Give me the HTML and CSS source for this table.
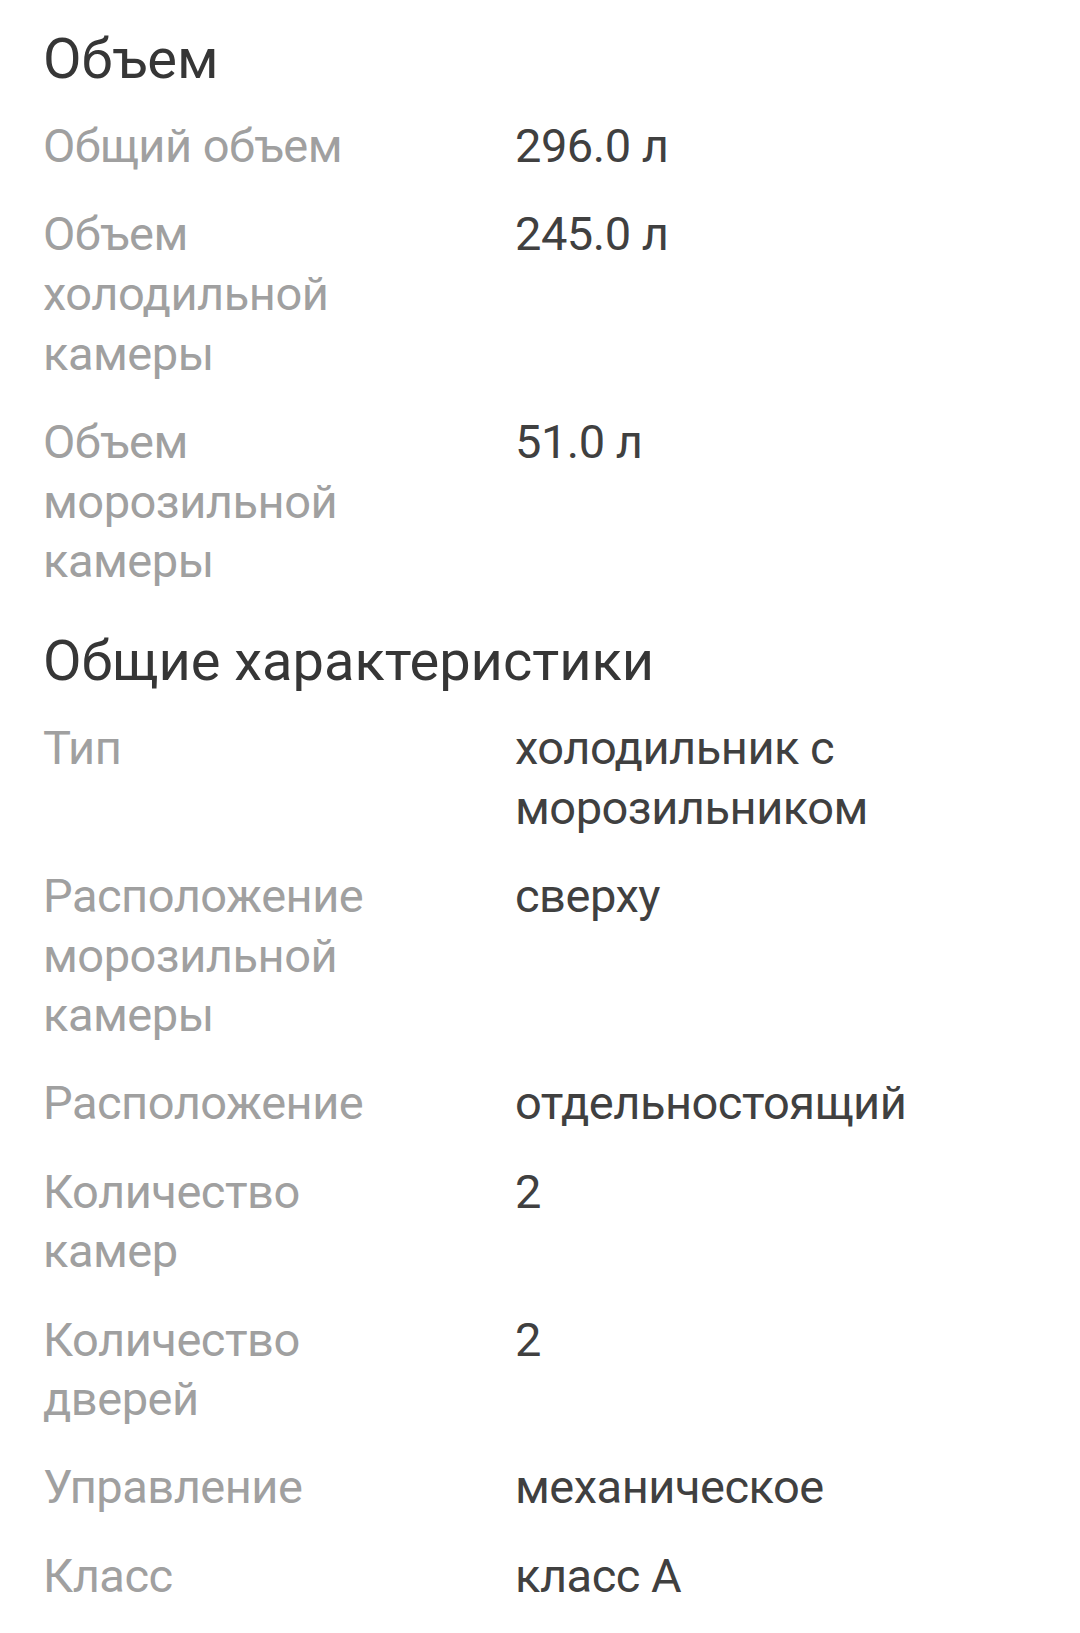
FILE: index.html
```html
<!DOCTYPE html>
<html lang="ru">
<head>
<meta charset="utf-8">
<link rel="stylesheet" href="styles.css">
</head>
<body>
<main class="specs">
  <section class="group">
    <h2 class="group-title">Объем</h2>
    <dl class="rows">
      <dt class="label">Общий объем</dt><dd class="value">296.0 л</dd>
      <dt class="label">Объем холодильной камеры</dt><dd class="value">245.0 л</dd>
      <dt class="label">Объем морозильной камеры</dt><dd class="value">51.0 л</dd>
    </dl>
  </section>
  <section class="group">
    <h2 class="group-title">Общие характеристики</h2>
    <dl class="rows">
      <dt class="label">Тип</dt><dd class="value">холодильник с морозильником</dd>
      <dt class="label">Расположение морозильной камеры</dt><dd class="value">сверху</dd>
      <dt class="label">Расположение</dt><dd class="value">отдельностоящий</dd>
      <dt class="label">Количество камер</dt><dd class="value">2</dd>
      <dt class="label">Количество дверей</dt><dd class="value">2</dd>
      <dt class="label">Управление</dt><dd class="value">механическое</dd>
      <dt class="label">Класс</dt><dd class="value">класс A</dd>
    </dl>
  </section>
</main>
</body>
</html>
```
FILE: styles.css
```css
html, body {
  margin: 0;
  padding: 0;
  background: #ffffff;
}
body {
  font-family: Roboto, "Noto Sans", sans-serif;
  -webkit-font-smoothing: antialiased;
}
.specs {
  padding: 29px 43px 0 43px;
}
.group + .group {
  margin-top: 40px;
}
.group-title {
  margin: 0 0 27px 0;
  font-size: 56px;
  font-weight: 400;
  line-height: 60px;
  color: #363636;
}
.rows {
  margin: 0;
  display: grid;
  grid-template-columns: 472px 1fr;
  row-gap: 28.5px;
}
.label, .value {
  margin: 0;
  font-size: 47px;
  letter-spacing: -0.5px;
  line-height: 59.7px;
}
.label {
  color: #a0a0a0;
  padding-right: 110px;
}
.value {
  color: #404040;
}
```
